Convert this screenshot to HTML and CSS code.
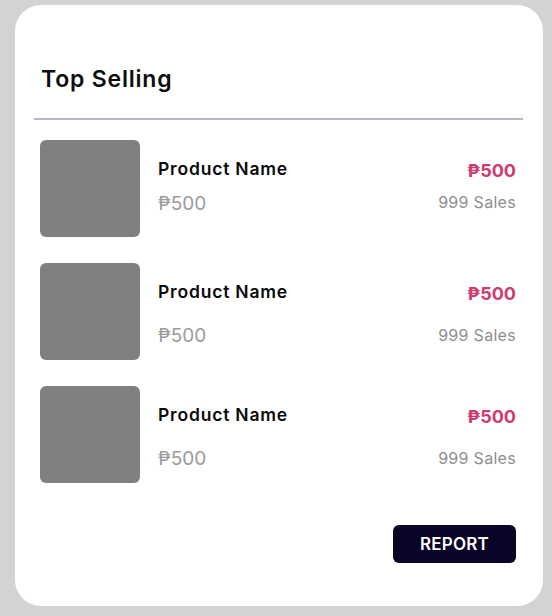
FILE: index.html
```html
<!DOCTYPE html>
<html lang="en">
<head>
<meta charset="utf-8">
<title>Top Selling</title>
<link rel="stylesheet" href="styles.css">
</head>
<body>
<div class="card">
  <h2 class="title">Top Selling</h2>
  <hr class="divider">
  <ul class="list">
    <li class="row row--first">
      <div class="thumb"></div>
      <div class="info">
        <div class="name">Product Name</div>
        <div class="base-price">₱500</div>
      </div>
      <div class="stats">
        <div class="price">₱500</div>
        <div class="sales">999 Sales</div>
      </div>
    </li>
    <li class="row">
      <div class="thumb"></div>
      <div class="info">
        <div class="name">Product Name</div>
        <div class="base-price">₱500</div>
      </div>
      <div class="stats">
        <div class="price">₱500</div>
        <div class="sales">999 Sales</div>
      </div>
    </li>
    <li class="row">
      <div class="thumb"></div>
      <div class="info">
        <div class="name">Product Name</div>
        <div class="base-price">₱500</div>
      </div>
      <div class="stats">
        <div class="price">₱500</div>
        <div class="sales">999 Sales</div>
      </div>
    </li>
  </ul>
  <div class="actions">
    <button class="report">REPORT</button>
  </div>
</div>
</body>
</html>
```
FILE: styles.css
```css
html, body {
  margin: 0;
  padding: 0;
}
body {
  background: #d3d3d3;
  width: 552px;
  height: 616px;
  overflow: hidden;
  font-family: Inter, "Open Sans", "DejaVu Sans", sans-serif;
}
.card {
  box-sizing: border-box;
  margin: 5px 9px 0 15px;
  width: 528px;
  height: 601px;
  background: #ffffff;
  border-radius: 26px;
  padding: 0 27px 0 25px;
  display: flex;
  flex-direction: column;
}
.title {
  margin: 59px 0 0 1px;
  font-size: 23px;
  line-height: 30px;
  font-weight: 600;
  color: #0d0d0d;
  letter-spacing: 0.8px;
}
.divider {
  margin: 24px -7px 0 -6px;
  border: 0;
  height: 2px;
  background: #bab6c9;
}
.list {
  list-style: none;
  margin: 20px 0 0 0;
  padding: 0;
  display: flex;
  flex-direction: column;
  gap: 26px;
}
.row {
  display: flex;
  align-items: flex-start;
}
.thumb {
  width: 100px;
  height: 97px;
  background: #808080;
  border-radius: 6px;
  flex: none;
}
.info {
  flex: 1;
  padding-left: 18px;
  padding-top: 17px;
}
.name {
  font-size: 17.5px;
  line-height: 24px;
  font-weight: 600;
  color: #0a0a0a;
  letter-spacing: 0.8px;
}
.base-price {
  margin-top: 19px;
  font-size: 19px;
  line-height: 26px;
  color: #9b9b9b;
}
.row--first .base-price {
  margin-top: 10px;
}
.stats {
  text-align: right;
  padding-top: 19px;
}
.price {
  font-size: 18px;
  line-height: 24px;
  font-weight: 700;
  color: #cf3b6c;
}
.sales {
  margin-top: 18px;
  font-size: 16px;
  line-height: 22px;
  color: #8e8e8e;
  letter-spacing: 0.3px;
}
.row--first .sales {
  margin-top: 8px;
}
.actions {
  display: flex;
  justify-content: flex-end;
  margin-top: 42px;
}
.report {
  width: 123px;
  height: 38px;
  border: 0;
  border-radius: 6px;
  background: #0a0426;
  color: #ffffff;
  font-family: inherit;
  font-size: 17px;
  font-weight: 600;
  letter-spacing: 0.2px;
  padding: 0;
  cursor: pointer;
}
```
